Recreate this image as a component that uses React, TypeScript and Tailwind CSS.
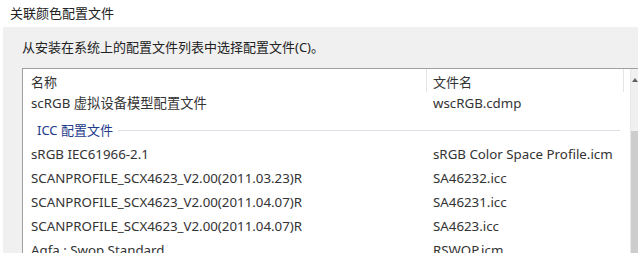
const FONT = "font-['Noto_Sans','Noto_Sans_CJK_SC',sans-serif]";

const rows = [
  { name: 'sRGB IEC61966-2.1', file: 'sRGB Color Space Profile.icm' },
  { name: 'SCANPROFILE_SCX4623_V2.00(2011.03.23)R', file: 'SA46232.icc' },
  { name: 'SCANPROFILE_SCX4623_V2.00(2011.04.07)R', file: 'SA46231.icc' },
  { name: 'SCANPROFILE_SCX4623_V2.00(2011.04.07)R', file: 'SA4623.icc' },
  { name: 'Agfa : Swop Standard', file: 'RSWOP.icm' },
];

function Row({ name, file }: { name: string; file: string }) {
  return (
    <div className="flex h-[24px] items-center text-[13.3px] text-[#333]">
      <div className="w-[403px] shrink-0 pl-[8px] whitespace-nowrap">{name}</div>
      <div className="pl-[7px] whitespace-nowrap">{file}</div>
    </div>
  );
}

export default function App() {
  return (
    <div className={`${FONT} w-[638px] h-[253px] overflow-hidden bg-white flex flex-col`}>
      {/* Dialog title */}
      <div className="h-[27px] shrink-0 pl-[10px] pt-[4px] text-[13px] text-[#222]">关联颜色配置文件</div>

      {/* Gray panel */}
      <div className="flex-1 ml-[3px] bg-[#f0f0f0] pl-[19px] pt-[10px] flex flex-col min-h-0">
        <div className="h-[31px] shrink-0 pt-[1px] text-[13px] text-[#222]">从安装在系统上的配置文件列表中选择配置文件(C)。</div>

        {/* List box */}
        <div className="flex-1 min-h-0 flex border-t border-l border-[#a0a0a0] bg-white">
          <div className="flex-1 min-w-0 overflow-hidden">
            {/* Column headers */}
            <div className="flex h-[23px] items-end text-[13px] text-[#333]">
              <div className="w-[403px] shrink-0 pl-[8px] leading-[19px]">名称</div>
              <div className="flex-1 h-full border-l border-[#e5e5e5] pl-[6px] pt-[3px] leading-[20px]">文件名</div>
              <div className="w-[1px] h-full bg-[#e5e5e5]" />
              <div className="w-[6px]" />
            </div>

            <Row name="scRGB 虚拟设备模型配置文件" file="wscRGB.cdmp" />

            {/* Group header */}
            <div className="flex h-[27px] items-center pl-[14px] pr-[10px] pt-[2px] text-[13px] text-[#1e3a8a]">
              <span className="whitespace-nowrap">ICC 配置文件</span>
              <div className="ml-[5px] flex-1 h-[1px] bg-[#dcdfe6]" />
            </div>

            {rows.map((r, i) => (
              <Row key={i} name={r.name} file={r.file} />
            ))}
          </div>

          {/* Scrollbar */}
          <div className="w-[8px] shrink-0 flex flex-col bg-[#f0f0f0] border-l border-[#e8e8e8]">
            <div className="h-[62px] flex justify-center pt-[9px]">
              <svg width="6" height="4" viewBox="0 0 6 4">
                <path d="M0 4 L3 0 L6 4 Z" fill="#606060" />
              </svg>
            </div>
            <div className="flex-1 bg-[#cdcdcd]" />
          </div>
        </div>
      </div>
    </div>
  );
}
